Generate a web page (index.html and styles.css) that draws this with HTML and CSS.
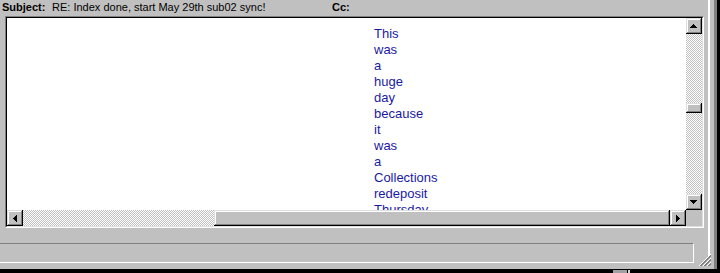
FILE: index.html
```html
<!DOCTYPE html>
<html lang="en">

<head>
    <meta charset="UTF-8">
    <meta name="viewport" content="width=device-width, initial-scale=1.0">
    <title>RE: Index done, start May 29th sub02 sync!</title>
    <link rel="stylesheet" href="styles.css">
</head>

<body>
    <div class="window">
        <div class="pane">
            <div class="header-row">
                <div class="field field-subject"><span class="label">Subject:</span> RE: Index done, start May 29th sub02 sync!</div>
                <div class="field"><span class="label">Cc:</span></div>
            </div>

            <div class="editor">
                <div class="editor-body">
                    <div class="content">
                        <p class="message">This was a huge day because it was a Collections redeposit Thursday and the index finished early</p>
                    </div>

                    <div class="vscroll">
                        <div class="sb-btn">
                            <svg width="16" height="16" viewBox="0 0 16 16"><path d="M7 6h1v1H7zM6 7h3v1H6zM5 8h5v1H5zM4 9h7v1H4z" /></svg>
                        </div>
                        <div class="sb-track">
                            <div class="sb-thumb vthumb"></div>
                        </div>
                        <div class="sb-btn">
                            <svg width="16" height="16" viewBox="0 0 16 16"><path d="M4 6h7v1H4zM5 7h5v1H5zM6 8h3v1H6zM7 9h1v1H7z" /></svg>
                        </div>
                    </div>

                    <div class="hscroll">
                        <div class="sb-btn">
                            <svg width="16" height="16" viewBox="0 0 16 16"><path d="M6 8h1v1H6zM7 7h1v3H7zM8 6h1v5H8zM9 5h1v7H9z" /></svg>
                        </div>
                        <div class="sb-track">
                            <div class="sb-thumb hthumb"></div>
                        </div>
                        <div class="sb-btn">
                            <svg width="16" height="16" viewBox="0 0 16 16"><path d="M6 5h1v7H6zM7 6h1v5H7zM8 7h1v3H8zM9 8h1v1H9z" /></svg>
                        </div>
                    </div>

                    <div class="sb-corner"></div>
                </div>
            </div>

            <div class="status"></div>
        </div>
        <div class="frame-edge"></div>

        <svg class="grip" width="12" height="12" viewBox="0 0 12 12">
            <path d="M12 0L0 12M12 4L4 12M12 8L8 12" stroke="#fff" />
            <path d="M12 1L1 12M12 2L2 12M12 5L5 12M12 6L6 12M12 9L9 12M12 10L10 12" stroke="#808080" />
        </svg>
    </div>

    <div class="taskbar">
        <span class="task-box"></span>
        <span class="task-bar"></span>
    </div>
</body>

</html>
```

FILE: styles.css
```css
body {
    margin: 0;
    width: 720px;
    height: 273px;
    overflow: hidden;
    background: #000;
    font-family: 'Liberation Sans', Arial, sans-serif;
}

.window {
    position: relative;
    display: flex;
    width: 714px;
    height: 269px;
    background: #c0c0c0;
    border-right: 3px solid #808080;
}

.pane {
    width: 708px;
    display: flex;
    flex-direction: column;
}

.frame-edge {
    width: 4px;
    height: 258px;
    border-left: 2px solid #fff;
}

.header-row {
    display: flex;
    height: 16px;
    font-size: 11px;
    line-height: 14px;
    color: #000;
}

.field-subject {
    width: 330px;
    padding-left: 2px;
}

.label {
    display: inline-block;
    width: 47px;
    font-weight: bold;
}

.editor {
    box-sizing: border-box;
    width: 699px;
    height: 212px;
    margin-left: 5px;
    border: 1px solid;
    border-color: #808080 #fff #fff #808080;
}

.editor-body {
    box-sizing: border-box;
    height: 100%;
    border: 1px solid;
    border-color: #000 #dfdfdf #dfdfdf #000;
    display: grid;
    grid-template-columns: 1fr 16px;
    grid-template-rows: 1fr 16px;
}

.content {
    background: #fff;
    overflow: hidden;
    padding: 8px 0 0 367px;
}

.message {
    margin: 0;
    width: 1px;
    font-size: 13px;
    line-height: 16px;
    color: #1a1aa0;
}

.vscroll {
    display: flex;
    flex-direction: column;
}

.hscroll {
    display: flex;
}

.sb-btn {
    flex: none;
    width: 16px;
    height: 16px;
    background: #c0c0c0;
    box-shadow: inset -1px -1px #000, inset 1px 1px #dfdfdf, inset -2px -2px #808080, inset 2px 2px #fff;
}

.sb-btn svg {
    display: block;
    fill: #000;
}

.sb-track {
    flex: 1;
    display: flex;
    background-color: #c0c0c0;
    background-image: conic-gradient(#fff 0 25%, #c0c0c0 0 50%, #fff 0 75%, #c0c0c0 0);
    background-size: 2px 2px;
}

.vscroll .sb-track {
    flex-direction: column;
}

.sb-thumb {
    background: #c0c0c0;
    box-shadow: inset -1px -1px #000, inset 1px 1px #dfdfdf, inset -2px -2px #808080, inset 2px 2px #fff;
}

.vthumb {
    margin-top: 69px;
    height: 10px;
}

.hthumb {
    flex: 1;
    margin-left: 191px;
}

.sb-corner {
    background: #c0c0c0;
}

.status {
    box-sizing: border-box;
    width: 694px;
    height: 20px;
    margin-top: 15px;
    border-top: 1px solid #808080;
    border-right: 1px solid #fff;
    border-bottom: 1px solid #fff;
}

.grip {
    position: absolute;
    right: 3px;
    bottom: 3px;
}

.taskbar {
    display: flex;
    height: 4px;
    padding-left: 613px;
    gap: 1px;
}

.task-box {
    width: 14px;
    margin-top: 1px;
    background: #a0a0a4;
}

.task-bar {
    width: 2px;
    margin-top: 1px;
    background: #d8d8d8;
}
```
